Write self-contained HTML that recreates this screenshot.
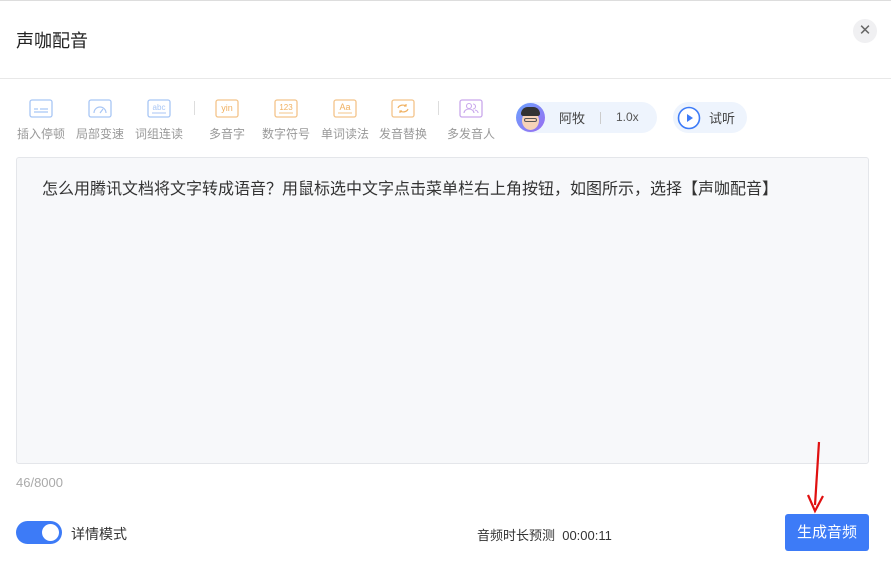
<!DOCTYPE html>
<html><head><meta charset="utf-8"><style>
*{margin:0;padding:0;box-sizing:border-box}
body{width:891px;height:574px;background:#fff;font-family:"Liberation Sans","Noto Sans CJK SC",sans-serif;position:relative;overflow:hidden;color:#333}
.topline{position:absolute;top:0;left:0;width:891px;height:1px;background:#ddd}
.title{position:absolute;left:16px;top:27px;font-size:18px;color:#222}
.close{position:absolute;left:853px;top:19px;width:24px;height:24px;border-radius:50%;background:#f0f0f2;color:#666;font-size:15px;text-align:center;line-height:24px}
.hr{position:absolute;left:0;top:78px;width:891px;height:1px;background:#e8e8e8}
.tool{position:absolute;top:99px;text-align:center;font-size:12px;color:#999;white-space:nowrap}
.tool svg{display:block;margin:0 auto 7px}
.sep{position:absolute;top:101px;width:1px;height:14px;background:#ddd}
.voice{position:absolute;left:516px;top:102px;width:141px;height:31px;border-radius:16px;background:#eef4fd}
.av{position:absolute;left:516px;top:103px;width:29px;height:29px;border-radius:50%;background:linear-gradient(135deg,#6aa2ff,#9a6cf0);overflow:hidden}
.play{position:absolute;left:673px;top:102px;width:74px;height:31px;border-radius:16px;background:#eef4fd}
.editor{position:absolute;left:16px;top:157px;width:853px;height:307px;border:1px solid #e4e6ea;border-radius:3px;background:#f7f8fa;padding:17px 25px;font-size:16px;color:#333}
.count{position:absolute;left:16px;top:475px;font-size:13px;color:#aaa}
.toggle{position:absolute;left:16px;top:521px;width:46px;height:23px;border-radius:12px;background:#3d7bf7}
.toggle::after{content:"";position:absolute;right:3px;top:3px;width:17px;height:17px;border-radius:50%;background:#fff}
.tlabel{position:absolute;left:71px;top:524px;font-size:14px;color:#333}
.dur{position:absolute;left:477px;top:525px;font-size:13px;color:#333}
.btn{position:absolute;left:785px;top:514px;width:84px;height:37px;border-radius:3px;background:#3d7bf7;color:#fff;font-size:15px;text-align:center;line-height:37px}
</style></head><body>
<div class="topline"></div>
<div class="title">声咖配音</div>
<div class="close">✕</div>
<div class="hr"></div>

<div class="tool" style="left:17px"><svg width="24" height="19"><rect x="1" y="1" width="22" height="17" rx="2" fill="none" stroke="#a8c6f5" stroke-width="1.3"/><path d="M5 10h4M11 10h8M5 13h14" stroke="#a8c6f5" stroke-width="1.2"/></svg>插入停顿</div>
<div class="tool" style="left:76px"><svg width="24" height="19"><rect x="1" y="1" width="22" height="17" rx="2" fill="none" stroke="#a8c6f5" stroke-width="1.3"/><path d="M6 14a6 6 0 0 1 12 0" fill="none" stroke="#a8c6f5" stroke-width="1.2"/><path d="M12 14l3-4" stroke="#a8c6f5" stroke-width="1.2"/></svg>局部变速</div>
<div class="tool" style="left:135px"><svg width="24" height="19"><rect x="1" y="1" width="22" height="17" rx="2" fill="none" stroke="#a8c6f5" stroke-width="1.3"/><text x="12" y="11" font-size="8" fill="#a8c6f5" text-anchor="middle" font-family="Liberation Sans">abc</text><path d="M5 14h14" stroke="#a8c6f5" stroke-width="1"/></svg>词组连读</div>
<div class="sep" style="left:194px"></div>
<div class="tool" style="left:209px"><svg width="24" height="19"><rect x="1" y="1" width="22" height="17" rx="2" fill="none" stroke="#f3c48a" stroke-width="1.3"/><text x="12" y="12" font-size="9" fill="#f0b060" text-anchor="middle" font-family="Liberation Sans">yin</text></svg>多音字</div>
<div class="tool" style="left:262px"><svg width="24" height="19"><rect x="1" y="1" width="22" height="17" rx="2" fill="none" stroke="#f3c48a" stroke-width="1.3"/><text x="12" y="11" font-size="8" fill="#f0b060" text-anchor="middle" font-family="Liberation Sans">123</text><path d="M5 14h14" stroke="#f3c48a" stroke-width="1"/></svg>数字符号</div>
<div class="tool" style="left:321px"><svg width="24" height="19"><rect x="1" y="1" width="22" height="17" rx="2" fill="none" stroke="#f3c48a" stroke-width="1.3"/><text x="12" y="11" font-size="9" fill="#f0b060" text-anchor="middle" font-family="Liberation Sans">Aa</text><path d="M5 14h14" stroke="#f3c48a" stroke-width="1"/></svg>单词读法</div>
<div class="tool" style="left:379px"><svg width="24" height="19"><rect x="1" y="1" width="22" height="17" rx="2" fill="none" stroke="#f3c48a" stroke-width="1.3"/><path d="M7 9a5 4 0 0 1 8-2M17 10a5 4 0 0 1-8 2M15 5v2h-2M9 14v-2h2" fill="none" stroke="#f0b060" stroke-width="1.2"/></svg>发音替换</div>
<div class="sep" style="left:438px"></div>
<div class="tool" style="left:447px"><svg width="24" height="19"><rect x="1" y="1" width="22" height="17" rx="2" fill="none" stroke="#c9a8ec" stroke-width="1.3"/><circle cx="10" cy="7" r="2.5" fill="none" stroke="#c9a8ec" stroke-width="1.1"/><path d="M5 14a5 4 0 0 1 10 0M14 5a2.5 2.5 0 0 1 0 5M16 11a4 3 0 0 1 3 3" fill="none" stroke="#c9a8ec" stroke-width="1.1"/></svg>多发音人</div>

<div class="voice"></div>
<div class="av"><div style="position:absolute;left:6px;top:8px;width:17px;height:19px;border-radius:50%;background:#f6d2b8"></div><div style="position:absolute;left:5px;top:4px;width:19px;height:9px;border-radius:9px 9px 3px 3px;background:#333"></div><div style="position:absolute;left:8px;top:15px;width:13px;height:4px;border:1px solid #555;border-radius:2px"></div></div>
<div style="position:absolute;left:559px;top:108px;font-size:13px;color:#444">阿牧</div>
<div style="position:absolute;left:600px;top:112px;width:1px;height:12px;background:#ccc"></div>
<div style="position:absolute;left:616px;top:110px;font-size:12px;color:#555">1.0x</div>
<div class="play"></div>
<svg style="position:absolute;left:677px;top:106px" width="24" height="24"><circle cx="12" cy="12" r="10.5" fill="#fff" stroke="#3d7bf7" stroke-width="1.6"/><path d="M10 8l6 4-6 4z" fill="#3d7bf7"/></svg>
<div style="position:absolute;left:709px;top:108px;font-size:13px;color:#444">试听</div>

<div class="editor">怎么用腾讯文档将文字转成语音？用鼠标选中文字点击菜单栏右上角按钮，如图所示，选择【声咖配音】</div>
<div class="count">46/8000</div>
<div class="toggle"></div>
<div class="tlabel">详情模式</div>
<div class="dur">音频时长预测&nbsp; 00:00:11</div>
<div class="btn">生成音频</div>
<svg style="position:absolute;left:800px;top:440px" width="30" height="80"><path d="M19 2L15 65" stroke="#e01010" stroke-width="2.2"/><path d="M8 55l7 16 8-15" fill="none" stroke="#e01010" stroke-width="2.2"/></svg>
</body></html>
